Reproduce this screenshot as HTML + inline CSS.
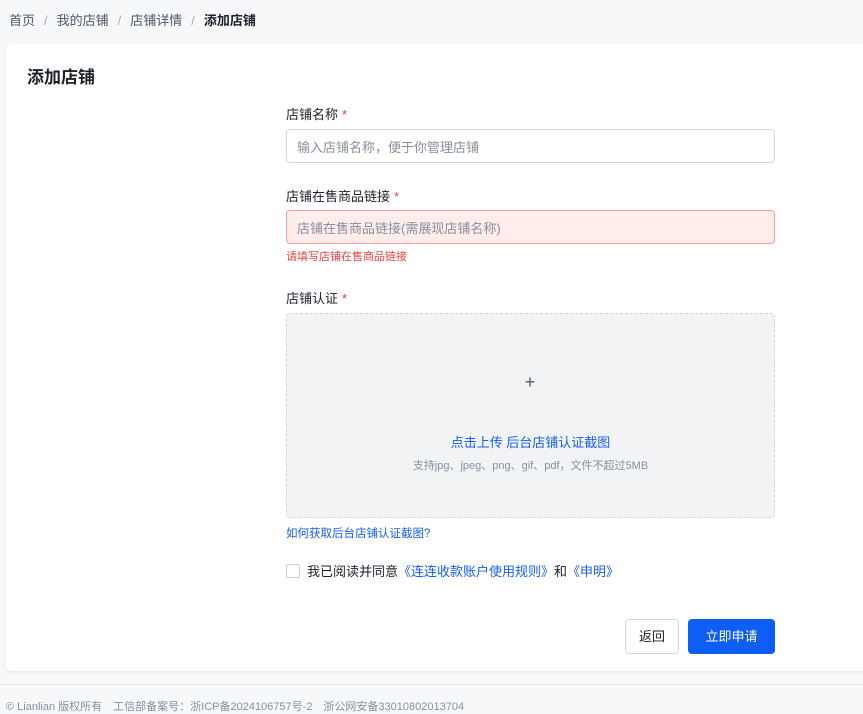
<!DOCTYPE html>
<html><head><meta charset="utf-8"><style>
*{box-sizing:border-box;margin:0;padding:0}
body{width:863px;height:709px;overflow:hidden;background:#f7f8fa;font-family:"Liberation Sans","Noto Sans CJK SC",sans-serif;color:#1d2129;position:relative}
.a{position:absolute}
.bc{top:10px;left:9px;font-size:13px;color:#4e5969;white-space:nowrap}
.bc span.s{color:#aaa;margin:0 9px}
.card{left:6px;top:44px;width:870px;height:627px;background:#fff;border-radius:6px;box-shadow:0 1px 3px rgba(0,0,0,.08)}
.lbl{font-size:13px;color:#1d2129}
.lbl b{color:#f53f3f;font-weight:normal;margin-left:4px}
.inp{left:286px;width:489px;height:34px;border:1px solid #d5d8de;border-radius:4px;font-size:13px;color:#86909c;padding:7px 10px}
</style></head><body>
<div class="a bc">首页<span class="s">/</span>我的店铺<span class="s">/</span>店铺详情<span class="s">/</span><span style="color:#1d2129;font-weight:bold">添加店铺</span></div>
<div class="a card"></div>
<div class="a" style="left:27px;top:63px;font-size:17px;font-weight:bold">添加店铺</div>
<div class="a lbl" style="left:286px;top:104px">店铺名称<b>*</b></div>
<div class="a inp" style="top:129px">输入店铺名称，便于你管理店铺</div>
<div class="a lbl" style="left:286px;top:186px">店铺在售商品链接<b>*</b></div>
<div class="a inp" style="top:210px;background:#ffeceb;border-color:#f99;">店铺在售商品链接(需展现店铺名称)</div>
<div class="a" style="left:286px;top:248px;font-size:11px;color:#f53f3f">请填写店铺在售商品链接</div>
<div class="a lbl" style="left:286px;top:288px">店铺认证<b>*</b></div>
<div class="a" style="left:286px;top:313px;width:489px;height:205px;background:#f2f3f5;border:1px dashed #d5d8de;border-radius:4px"></div>
<div class="a" style="left:522px;top:372px;width:16px;text-align:center;font-size:18px;color:#4e5969">+</div>
<div class="a" style="left:286px;top:432px;width:489px;text-align:center;font-size:13px;color:#165dff">点击上传 后台店铺认证截图</div>
<div class="a" style="left:286px;top:457px;width:489px;text-align:center;font-size:11px;color:#86909c">支持jpg、jpeg、png、gif、pdf，文件不超过5MB</div>
<div class="a" style="left:286px;top:525px;font-size:11.5px;color:#165dff">如何获取后台店铺认证截图?</div>
<div class="a" style="left:286px;top:564px;width:14px;height:14px;border:1px solid #c9cdd4;border-radius:2px;background:#fff"></div>
<div class="a" style="left:307px;top:561px;font-size:13px">我已阅读并同意<span style="color:#165dff">《连连收款账户使用规则》</span>和<span style="color:#165dff">《申明》</span></div>
<div class="a" style="left:625px;top:619px;width:54px;height:35px;border:1px solid #d5d8de;border-radius:4px;font-size:13px;text-align:center;line-height:33px">返回</div>
<div class="a" style="left:688px;top:619px;width:87px;height:35px;background:#0e5ef5;border-radius:4px;font-size:13px;color:#fff;text-align:center;line-height:35px">立即申请</div>
<div class="a" style="left:0;top:684px;width:863px;border-top:1px solid #e5e6eb"></div>
<div class="a" style="left:6px;top:698px;font-size:11px;color:#86909c;white-space:nowrap">© Lianlian 版权所有　工信部备案号：浙ICP备2024106757号-2　浙公网安备33010802013704</div>
</body></html>
